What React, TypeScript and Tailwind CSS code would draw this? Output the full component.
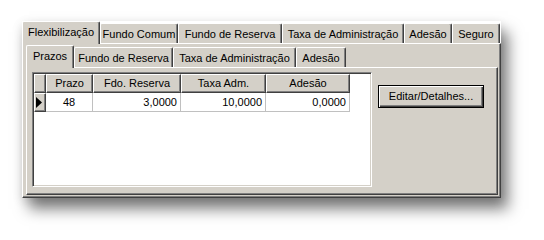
import React from "react";

const outerTabs = [
  { label: "Flexibilização", w: "w-[78px]", active: true },
  { label: "Fundo Comum", w: "w-[78px]" },
  { label: "Fundo de Reserva", w: "w-[104px]" },
  { label: "Taxa de Administração", w: "w-[122px]" },
  { label: "Adesão", w: "w-[48px]" },
  { label: "Seguro", w: "w-[48px]" },
];

const innerTabs = [
  { label: "Prazos", w: "w-[48px]", active: true },
  { label: "Fundo de Reserva", w: "w-[99px]" },
  { label: "Taxa de Administração", w: "w-[123px]" },
  { label: "Adesão", w: "w-[50px]" },
];

const columns = [
  { label: "Prazo", w: "w-[47px]", value: "48", align: "justify-center" },
  { label: "Fdo. Reserva", w: "w-[88px]", value: "3,0000", align: "justify-end" },
  { label: "Taxa Adm.", w: "w-[85px]", value: "10,0000", align: "justify-end" },
  { label: "Adesão", w: "w-[84px]", value: "0,0000", align: "justify-end" },
];

function Tab({ label, w, active }: { label: string; w: string; active?: boolean }) {
  if (active) {
    return (
      <div
        className={`${w} h-[23px] -mb-px relative z-10 flex items-center justify-center pb-[2px] bg-[#d4d0c8] border-l border-t border-white border-r border-r-[#404040] rounded-tl-[2px] rounded-tr-[2px] shadow-[inset_-1px_0_0_#808080]`}
      >
        {label}
      </div>
    );
  }
  return (
    <div
      className={`${w} h-[20px] flex items-center justify-center pt-[1px] bg-[#d4d0c8] border-l border-t border-white border-r border-r-[#404040] rounded-tl-[2px] rounded-tr-[2px] shadow-[inset_-1px_0_0_#808080]`}
    >
      {label}
    </div>
  );
}

export default function App() {
  return (
    <div className="w-[544px] h-[240px] bg-white pl-[22px] pt-[21px] font-['Liberation_Sans',Arial,sans-serif] text-[11px] text-black">
      <div className="w-[479px] flex flex-col shadow-[7px_11px_14px_rgba(0,0,0,0.5),0_3px_10px_rgba(0,0,0,0.12)]">
        <div className="flex items-end h-[22px] bg-white">
          {outerTabs.map((t) => (
            <Tab key={t.label} {...t} />
          ))}
        </div>
        <div className="h-[155px] bg-[#d4d0c8] border-l border-t border-white border-r border-b border-r-[#404040] border-b-[#404040] shadow-[inset_-1px_-1px_0_#808080] pl-[3px] pt-[1px] pr-[2px]">
          <div className="flex items-end h-[22px]">
            {innerTabs.map((t) => (
              <Tab key={t.label} {...t} />
            ))}
          </div>
          <div className="h-[128px] border-l border-t border-white border-r border-b border-r-[#404040] border-b-[#404040] shadow-[inset_-1px_-1px_0_#808080] pl-[5px] pt-[4px] flex gap-[6px]">
            <div className="w-[340px] h-[115px] bg-white border-l border-t border-[#808080] border-r border-b border-r-white border-b-white shadow-[inset_1px_1px_0_#404040,inset_-1px_-1px_0_#d4d0c8] pl-[1px] pt-[1px]">
              <div className="flex">
                <div className="w-[12px] h-[19px] bg-[#d4d0c8] border-l border-t border-white border-r border-b border-r-[#404040] border-b-[#404040] shadow-[inset_-1px_-1px_0_#808080]" />
                {columns.map((c) => (
                  <div
                    key={c.label}
                    className={`${c.w} h-[19px] flex items-center justify-center bg-[#d4d0c8] border-l border-t border-white border-r border-b border-r-[#404040] border-b-[#404040] shadow-[inset_-1px_-1px_0_#808080]`}
                  >
                    {c.label}
                  </div>
                ))}
              </div>
              <div className="flex">
                <div className="w-[12px] h-[19px] flex items-center bg-[#d4d0c8] border-l border-t border-white border-r border-b border-r-[#404040] border-b-[#404040] shadow-[inset_-1px_-1px_0_#808080] pl-[1px]">
                  <svg width="6" height="11" viewBox="0 0 6 11">
                    <path d="M0 0 L6 5.5 L0 11 Z" fill="#000" />
                  </svg>
                </div>
                {columns.map((c) => (
                  <div
                    key={c.label}
                    className={`${c.w} h-[19px] flex items-center ${c.align} px-[3px] border-r border-b border-[#c0c0c0]`}
                  >
                    {c.value}
                  </div>
                ))}
              </div>
            </div>
            <div className="pt-[13px]">
              <button
                type="button"
                className="w-[106px] h-[23px] bg-[#d4d0c8] border border-black shadow-[inset_1px_1px_0_#ffffff,inset_-1px_-1px_0_#404040,inset_-2px_-2px_0_#808080] flex items-center justify-center"
              >
                Editar/Detalhes...
              </button>
            </div>
          </div>
        </div>
      </div>
    </div>
  );
}
